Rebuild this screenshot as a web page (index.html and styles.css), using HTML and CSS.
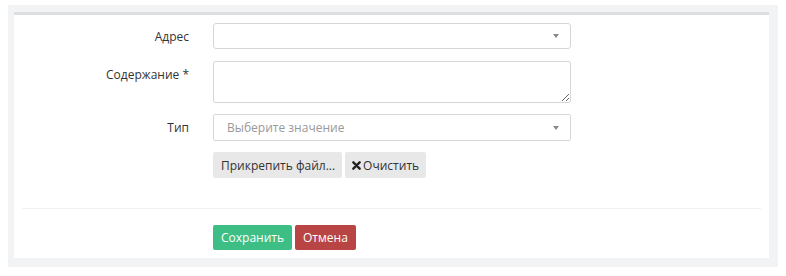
FILE: index.html
```html
<!DOCTYPE html>
<html lang="ru">
<head>
    <meta charset="UTF-8">
    <meta name="viewport" content="width=device-width, initial-scale=1.0">
    <title>Сообщение</title>
    <link rel="stylesheet" href="styles.css">
</head>
<body>
    <!-- обёртка формы -->
    <div class="panel">
        <div class="card">
            <form class="form">
                <div class="row row-first">
                    <label class="label" for="address">Адрес</label>
                    <div class="select" id="address">
                        <span class="select-text"></span>
                        <span class="caret"></span>
                    </div>
                </div>
                <div class="row row-top">
                    <label class="label label-area" for="content">Содержание *</label>
                    <textarea id="content" class="area"></textarea>
                </div>
                <div class="row">
                    <label class="label" for="type">Тип</label>
                    <div class="select select-type" id="type">
                        <span class="select-text placeholder">Выберите значение</span>
                        <span class="caret"></span>
                    </div>
                </div>
                <div class="row row-last">
                    <span class="label"></span>
                    <div class="files">
                        <button type="button" class="btn btn-light btn-attach">Прикрепить файл...</button>
                        <button type="button" class="btn btn-light btn-clear">
                            <svg width="9" height="9" viewBox="0 0 10 10"><path d="M1.5 1.5 L8.5 8.5 M8.5 1.5 L1.5 8.5" stroke="#222" stroke-width="2.6" stroke-linecap="round"/></svg>
                            Очистить
                        </button>
                    </div>
                </div>
            </form>
            <div class="divider"></div>
            <div class="actions">
                <button type="button" class="btn btn-save">Сохранить</button>
                <button type="button" class="btn btn-cancel">Отмена</button>
            </div>
        </div>
    </div>
</body>
</html>
```

FILE: styles.css
```css
/* страница */
body {
    margin: 0;
    background: #fff;
    font-family: "Open Sans", Arial, sans-serif;
    font-size: 12px;
    color: #333;
}

/* серая подложка */
.panel {
    margin: 5px 8px 9px;
    padding: 7px 9px 9px 6px;
    background: #f2f3f5;
}

/* белая карточка */
.card {
    background: #fff;
    border-top: 3px solid #dcdee2;
    padding: 8px;
}

.row {
    display: flex;
    align-items: center;
    margin-bottom: 11px;
}

.row-first {
    margin-bottom: 12px;
}

.row-last {
    margin-bottom: 0;
}

.row-top {
    align-items: flex-start;
}

.label {
    width: 167px;
    margin-right: 24px;
    text-align: right;
    flex: none;
}

.label-area {
    padding-top: 5px;
}

/* выпадающие списки */
.select {
    position: relative;
    width: 343px;
    height: 24px;
    border: 1px solid #d6d6d6;
    border-radius: 3px;
    display: flex;
    align-items: center;
    padding-left: 13px;
}

.select-type {
    height: 25px;
    border-radius: 2px;
}

.placeholder {
    color: #999;
}

.caret {
    position: absolute;
    right: 11px;
    top: 50%;
    margin-top: -2px;
    border-left: 3px solid transparent;
    border-right: 3px solid transparent;
    border-top: 4px solid #888;
}

.area {
    width: 356px;
    height: 40px;
    padding: 0;
    border: 1px solid #d6d6d6;
    border-radius: 2px;
    resize: vertical;
    margin: 0;
    font-family: inherit;
    display: block;
}

.files {
    display: flex;
    gap: 3px;
}

/* кнопки */
.btn {
    font-family: inherit;
    font-size: 12px;
    border: none;
    border-radius: 2px;
    height: 26px;
    padding: 0 8px;
    cursor: pointer;
}

.btn-light {
    background: #e8e8e8;
    color: #333;
}

.btn-attach {
    padding: 0 7px 0 8px;
}

.btn-clear {
    display: flex;
    align-items: center;
    gap: 2px;
    padding: 0 7px 0 7px;
}

.divider {
    height: 1px;
    background: #f0f0f0;
    margin: 30px 0 16px;
}

.actions {
    display: flex;
    gap: 3px;
    padding-left: 191px;
}

.btn-save {
    background: #3cbe84;
    color: #fff;
    height: 25px;
}

.btn-cancel {
    background: #b94444;
    color: #fff;
    height: 25px;
    padding: 0 8px;
}
```
